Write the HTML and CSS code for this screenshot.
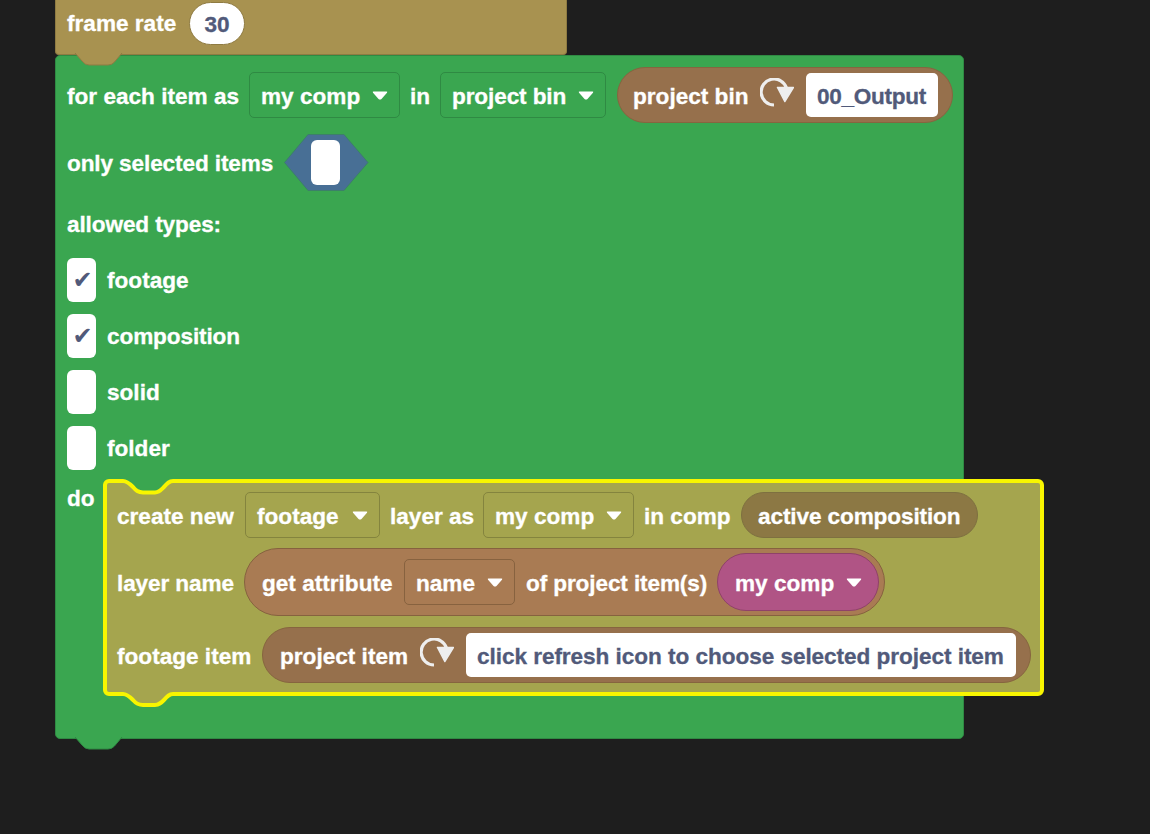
FILE: index.html
```html
<!DOCTYPE html>
<html lang="en">
<head>
<meta charset="utf-8">
<title>Blocks</title>
<link rel="stylesheet" href="styles.css">
</head>
<body>
<main class="stage">
  <section class="block frame-block">
    <span class="label l-frame">frame rate</span>
    <span class="num-field">30</span>
    <svg class="tab" viewBox="0 0 48 13"><path class="tab-gold" d="M0 0 L7 8 Q10 12 14 12 H33 Q37 12 39.500 9 L47 0 Z"/><path class="tab-gold-line" d="M0 0 L7 8 Q10 12 14 12 H33 Q37 12 39.500 9 L47 0"/></svg>
  </section>

  <section class="block loop-block">
    <div class="row row-first">
      <span class="label l-foreach">for each item as</span>
      <span class="dropdown green-dd w-mycomp">my comp<svg class="caret" viewBox="0 0 16 9"><path d="M1.500 0.500 H14.500 Q15.800 0.500 15 1.800 L9.500 8 Q8 9 6.500 8 L1 1.800 Q0.200 0.500 1.500 0.500 Z"/></svg></span>
      <span class="label l-in">in</span>
      <span class="dropdown green-dd w-bin tight">project bin<svg class="caret" viewBox="0 0 16 9"><path d="M1.500 0.500 H14.500 Q15.800 0.500 15 1.800 L9.500 8 Q8 9 6.500 8 L1 1.800 Q0.200 0.500 1.500 0.500 Z"/></svg></span>
      <span class="pill brown-pill bin-pill">
        <span class="label l-bin">project bin</span>
        <svg class="refresh" viewBox="0 0 34 30"><path class="refresh-arc" d="M14 27 A13 13 0 1 1 26.500 10"/><path class="refresh-head" d="M17.500 9.500 H33.500 L24.800 23.500 Z"/></svg>
        <span class="text-field bin-field">00_Output</span>
      </span>
    </div>
    <div class="row row-toggle">
      <span class="label l-only tight">only selected items</span>
      <svg class="toggle" viewBox="0 0 85 58"><polygon class="toggle-hex" points="0.500,28.500 24,0.500 60,0.500 84,28.500 60,56.500 24,56.500"/><rect class="toggle-knob" x="27" y="6" width="29" height="45" rx="6"/></svg>
    </div>
    <div class="row row-heading"><span class="label tight">allowed types:</span></div>
    <div class="row check-row"><span class="checkbox">✔</span><span class="label">footage</span></div>
    <div class="row check-row"><span class="checkbox">✔</span><span class="label tight">composition</span></div>
    <div class="row check-row"><span class="checkbox"></span><span class="label">solid</span></div>
    <div class="row check-row"><span class="checkbox"></span><span class="label">folder</span></div>
    <div class="do-row">
      <span class="label do-label">do</span>
      <div class="block selected-block">
        <svg class="slot" viewBox="0 0 50 15"><path class="slot-fill" d="M0 2 C4 2 7 5 10 8 C13 11.500 15 13.500 20 13.500 H32 C36 13.500 38 11 41 8 C44 4.500 46 2 50 2 V-0.500 H0 Z"/><path class="slot-line" d="M-1 2 H0 C4 2 7 5 10 8 C13 11.500 15 13.500 20 13.500 H32 C36 13.500 38 11 41 8 C44 4.500 46 2 50 2 H51"/></svg>
        <div class="row inner-first">
          <span class="label l-create">create new</span>
          <span class="dropdown olive-dd w-footage">footage<svg class="caret" viewBox="0 0 16 9"><path d="M1.500 0.500 H14.500 Q15.800 0.500 15 1.800 L9.500 8 Q8 9 6.500 8 L1 1.800 Q0.200 0.500 1.500 0.500 Z"/></svg></span>
          <span class="label l-layeras">layer as</span>
          <span class="dropdown olive-dd w-mycomp">my comp<svg class="caret" viewBox="0 0 16 9"><path d="M1.500 0.500 H14.500 Q15.800 0.500 15 1.800 L9.500 8 Q8 9 6.500 8 L1 1.800 Q0.200 0.500 1.500 0.500 Z"/></svg></span>
          <span class="label l-incomp">in comp</span>
          <span class="pill active-pill"><span class="label tight">active composition</span></span>
        </div>
        <div class="row inner-second">
          <span class="label l-layername tight">layer name</span>
          <span class="pill attr-pill">
            <span class="label l-attr">get attribute</span>
            <span class="dropdown attr-dd">name<svg class="caret" viewBox="0 0 16 9"><path d="M1.500 0.500 H14.500 Q15.800 0.500 15 1.800 L9.500 8 Q8 9 6.500 8 L1 1.800 Q0.200 0.500 1.500 0.500 Z"/></svg></span>
            <span class="label l-of tight">of project item(s)</span>
            <span class="pill pink-pill">my comp<svg class="caret" viewBox="0 0 16 9"><path d="M1.500 0.500 H14.500 Q15.800 0.500 15 1.800 L9.500 8 Q8 9 6.500 8 L1 1.800 Q0.200 0.500 1.500 0.500 Z"/></svg></span>
          </span>
        </div>
        <div class="row inner-third">
          <span class="label l-footageitem">footage item</span>
          <span class="pill brown-pill item-pill">
            <span class="label l-item">project item</span>
            <svg class="refresh" viewBox="0 0 34 30"><path class="refresh-arc" d="M14 27 A13 13 0 1 1 26.500 10"/><path class="refresh-head" d="M17.500 9.500 H33.500 L24.800 23.500 Z"/></svg>
            <span class="text-field wide-field">click refresh icon to choose selected project item</span>
          </span>
        </div>
        <svg class="tab tab-selected" viewBox="0 0 50 15"><path class="tab-olive" d="M0 2 C4 2 7 5 10 8 C13 11.500 15 13 20 13 H32 C36 13 38 11 41 8 C44 4.500 46 2 50 2 V-0.500 H0 Z"/><path class="slot-line" d="M-1 2 H0 C4 2 7 5 10 8 C13 11.500 15 13 20 13 H32 C36 13 38 11 41 8 C44 4.500 46 2 50 2 H51"/></svg>
      </div>
    </div>
    <svg class="tab" viewBox="0 0 48 13"><path class="tab-green" d="M0 0 L7 8 Q10 12 14 12 H33 Q37 12 39.500 9 L47 0 Z"/><path class="tab-green-line" d="M0 0 L7 8 Q10 12 14 12 H33 Q37 12 39.500 9 L47 0"/></svg>
  </section>
</main>
</body>
</html>
```
FILE: styles.css
```css
* { box-sizing: border-box; }
html, body { margin: 0; padding: 0; height: 100%; background: #1e1e1e; overflow: hidden; }
body {
  font-family: "Liberation Sans", Arial, sans-serif; font-weight: 700; font-size: 22.6px; color: #fff;
  -webkit-text-stroke: 0.3px currentColor;
}

.stage { display: flex; flex-direction: column; align-items: flex-start; padding-left: 55px; }
.label { white-space: nowrap; line-height: 26px; padding-top: 3px; flex: none; }
.tight { letter-spacing: -0.12px; }

.l-frame { width: 111px; margin-top: 6px; }
.l-foreach { width: 172px; }
.l-in { width: 20px; }
.l-bin { width: 115px; }
.l-only { width: 207px; }
.l-create { width: 118px; }
.l-layeras { width: 83px; }
.l-incomp { width: 87px; }
.l-layername { width: 117px; }
.l-attr { width: 131px; }
.l-of { width: 181px; }
.l-footageitem { width: 135px; }
.l-item { width: 128px; }

.block { position: relative; flex: none; }

.frame-block {
  z-index: 1; width: 512px; height: 55px; display: flex; align-items: flex-start; gap: 11px;
  padding: 2px 0 0 11px; background: #a89250; border: 1px solid #8f7b42; border-top: 0; border-radius: 0 0 4px 4px;
}
.num-field {
  width: 56px; height: 43px; padding-top: 3px; border-radius: 22px; background: #fff; color: #515a7a;
  border: 1px solid #8f7b42; display: flex; align-items: center; justify-content: center;
}
.tab { position: absolute; left: 19px; top: 100%; width: 48px; height: 13px; overflow: visible; margin-top: -1px; display: block; }
.tab-gold { fill: #a89250; }
.tab-gold-line { fill: none; stroke: #8f7b42; stroke-width: 1; }
.tab-green { fill: #3aa650; }
.tab-green-line { fill: none; stroke: #2f8a43; stroke-width: 1; }

.loop-block {
  width: 909px; height: 684px; padding: 11px 0 0 11px; background: #3aa650;
  border: 1px solid #2f8a43; border-radius: 5px; display: flex; flex-direction: column;
}
.row { display: flex; align-items: center; gap: 10px; flex: none; }
.row-first { height: 56px; }
.row-toggle { height: 58px; margin-top: 10px; gap: 11px; }
.row-heading { height: 46px; margin-top: 10px; }
.check-row { height: 44px; margin-top: 12px; gap: 11px; }
.row-heading + .check-row { margin-top: 11px; }
.row-heading .label, .check-row .label { padding-top: 1px; }

.dropdown {
  height: 46px; display: inline-flex; align-items: center; padding: 3px 11px 0;
  border-radius: 5px; white-space: pre; line-height: 26px; flex: none;
}
.w-mycomp { width: 151px; }
.w-bin { width: 166px; }
.w-footage { width: 135px; }
.green-dd { border: 1px solid #2f8a43; }
.olive-dd { border: 1px solid #84843e; }
.attr-dd { width: 111px; border: 1px solid #87623f; }
.caret { width: 16px; height: 9px; fill: #fff; flex: none; margin: -3px 0 0 auto; }

.pill { display: inline-flex; align-items: center; flex: none; white-space: pre; }
.brown-pill { height: 56px; border-radius: 28px; background: #96704c; border: 1px solid #86653f; }
.bin-pill { width: 336px; margin-left: 1px; padding-left: 15px; }
.item-pill { width: 769px; padding-left: 17px; }
.refresh { width: 34px; height: 30px; flex: none; margin: -4px 12px 0; }
.refresh-arc { fill: none; stroke: #eee; stroke-width: 3.200; }
.refresh-head { fill: #eee; stroke: #eee; stroke-width: 1.500; stroke-linejoin: round; }
.text-field {
  height: 44px; padding: 3px 11px 0; display: flex; align-items: center; background: #fff;
  color: #515a7a; border-radius: 5px; flex: none; line-height: 26px;
}
.bin-field { width: 132px; letter-spacing: -0.3px; }
.wide-field { width: 550px; white-space: nowrap; letter-spacing: -0.06px; }

.toggle { width: 85px; height: 58px; flex: none; margin-top: 2px; margin-left: -1px; }
.toggle-hex { fill: #486f95; stroke: #3c8069; stroke-width: 1; }
.toggle-knob { fill: #fff; }

.checkbox {
  width: 29px; height: 44px; flex: none; display: flex; align-items: center; justify-content: center;
  padding-left: 2px; background: #fff; color: #515a7a; border-radius: 6px;
  font-family: "DejaVu Sans", sans-serif; font-size: 24px; -webkit-text-stroke: 0;
}

.do-row { display: flex; align-items: flex-start; gap: 8px; margin-top: 9px; }
.do-label { width: 28px; margin-top: 4px; }
.selected-block {
  width: 941px; height: 217px; padding: 9px 0 0 10px; background: #a5a54e;
  border: 4px solid #f8f500; border-radius: 6px; display: flex; flex-direction: column;
}
.slot { position: absolute; left: 16px; top: -4px; width: 50px; height: 15px; overflow: visible; display: block; }
.slot-fill { fill: #3aa650; }
.slot-line { fill: none; stroke: #f8f500; stroke-width: 4; }
.tab-selected { left: 16px; top: 100%; width: 50px; height: 15px; margin-top: 0; }
.tab-olive { fill: #a5a54e; }

.inner-first { height: 46px; }
.inner-second { height: 68px; margin-top: 10px; }
.inner-third { height: 56px; margin-top: 11px; }

.active-pill { height: 46px; width: 237px; padding-left: 16px; border-radius: 23px; background: #8c7844; border: 1px solid #7e7040; }
.attr-pill { height: 68px; width: 641px; padding: 0 5px 0 17px; gap: 10px; border-radius: 34px; background: #a97b53; border: 1px solid #86623f; }
.attr-pill .attr-dd { margin: 0 1px; }
.pink-pill { height: 58px; width: 162px; padding: 3px 16px 0 17px; border-radius: 29px; background: #b05485; border: 1px solid #8f4269; }
```
